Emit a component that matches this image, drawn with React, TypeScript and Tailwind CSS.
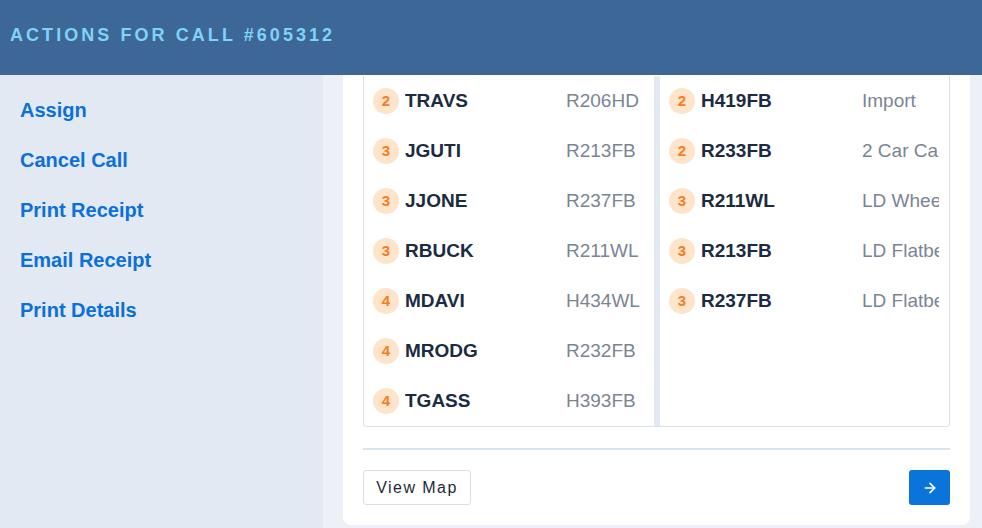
import { ArrowRight } from "lucide-react";

type Row = { level: number; name: string; detail: string };

const leftRows: Row[] = [
  { level: 2, name: "TRAVS", detail: "R206HD" },
  { level: 3, name: "JGUTI", detail: "R213FB" },
  { level: 3, name: "JJONE", detail: "R237FB" },
  { level: 3, name: "RBUCK", detail: "R211WL" },
  { level: 4, name: "MDAVI", detail: "H434WL" },
  { level: 4, name: "MRODG", detail: "R232FB" },
  { level: 4, name: "TGASS", detail: "H393FB" },
];

const rightRows: Row[] = [
  { level: 2, name: "H419FB", detail: "Import" },
  { level: 2, name: "R233FB", detail: "2 Car Carrier" },
  { level: 3, name: "R211WL", detail: "LD Wheel Lift" },
  { level: 3, name: "R213FB", detail: "LD Flatbed" },
  { level: 3, name: "R237FB", detail: "LD Flatbed" },
];

const actions = ["Assign", "Cancel Call", "Print Receipt", "Email Receipt", "Print Details"];

function ListRow({ row }: { row: Row }) {
  return (
    <div className="flex h-[50px] items-center pl-[9px] pr-[10px]">
      <span className="flex h-[26px] w-[26px] shrink-0 items-center justify-center rounded-full bg-[#fee4ca] text-[15px] font-semibold text-[#f47d1f]">
        {row.level}
      </span>
      <span className="ml-[6px] w-[161px] shrink-0 text-[19px] font-bold text-[#1b2b41]">{row.name}</span>
      {/* detail text is clipped by the column, no ellipsis */}
      <span className="min-w-0 flex-1 overflow-hidden whitespace-nowrap text-[19px] text-[#7a8594]">
        {row.detail}
      </span>
    </div>
  );
}

export default function App() {
  return (
    <div className="flex h-[528px] w-[982px] flex-col overflow-hidden font-['Liberation_Sans',Arial,sans-serif]">
      <header className="h-[75px] shrink-0 bg-[#3d6796] px-[10px] pt-[24px]">
        <h1 className="text-[18px] font-bold leading-[22px] tracking-[0.17em] text-[#7dd3f8]">
          ACTIONS FOR CALL #605312
        </h1>
      </header>

      <div className="flex min-h-0 flex-1">
        <aside className="w-[323px] shrink-0 bg-[#e2e9f3] pl-[20px] pt-[10px]">
          {actions.map((a) => (
            <div key={a} className="flex h-[50px] items-center text-[20px] font-bold text-[#0b70d8]">
              {a}
            </div>
          ))}
        </aside>

        <main className="min-w-0 flex-1 bg-[#edf1f7] pl-[20px] pr-[12px]">
          <div className="rounded-b-lg bg-white px-[20px] pb-[20px] pt-px">
            <div className="flex rounded-b-[4px] border-x border-b border-[#d8e1eb]">
              <div className="w-[290px] shrink-0">
                {leftRows.map((r) => (
                  <ListRow key={r.name} row={r} />
                ))}
              </div>
              <div className="w-[6px] shrink-0 bg-[#e3e9f2]" />
              <div className="w-[289px] shrink-0">
                {rightRows.map((r) => (
                  <ListRow key={r.name} row={r} />
                ))}
              </div>
            </div>

            <div className="mt-[21px] h-[2px] bg-[#dbe4ee]" />

            <div className="mt-[20px] flex items-center justify-between">
              <button className="h-[35px] w-[108px] rounded-[3px] border border-[#d6e0ea] bg-white text-[16px] tracking-[0.09em] text-[#1e2a3a]">
                View Map
              </button>
              <button className="flex h-[35px] w-[41px] items-center justify-center rounded-[3px] bg-[#0a74da] text-white">
                <ArrowRight size={16} strokeWidth={2.5} />
              </button>
            </div>
          </div>
        </main>
      </div>
    </div>
  );
}
